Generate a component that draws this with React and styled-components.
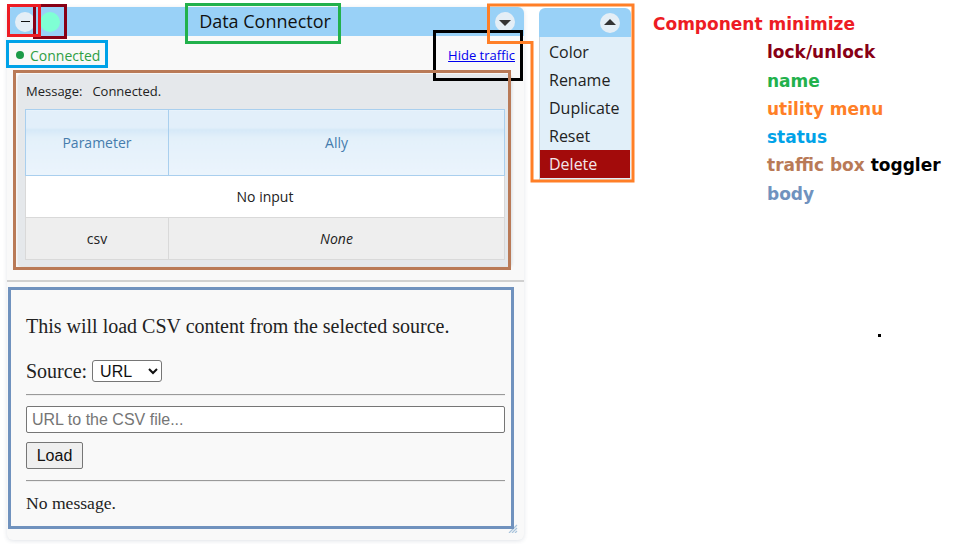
import React from "react";
import styled, { createGlobalStyle } from "styled-components";

const Global = createGlobalStyle`
  html, body { margin: 0; padding: 0; background: #ffffff; }
  * { box-sizing: border-box; }
`;

const UI = `"Open Sans", "Noto Sans", sans-serif`;
const SERIF = `"Liberation Serif", "Times New Roman", serif`;
const ARIAL = `"Liberation Sans", Arial, sans-serif`;

const Page = styled.div`
  position: relative;
  width: 957px;
  height: 544px;
  display: flex;
  align-items: flex-start;
  padding-left: 7px;
  overflow: hidden;
`;

const Card = styled.div`
  margin-top: 7px;
  width: 517px;
  height: 533px;
  background: #f9f9f9;
  border-radius: 6px;
  box-shadow: 0 1px 4px rgba(60, 80, 110, 0.16);
  display: flex;
  flex-direction: column;
  position: relative;
  font-family: ${UI};
`;

const Header = styled.div`
  height: 29px;
  background: #99d1f7;
  border-radius: 6px 6px 0 0;
  display: grid;
  grid-template-columns: 1fr auto 1fr;
  align-items: center;
  padding: 0 9px 0 8px;
`;

const HeaderSide = styled.div`
  display: flex;
  align-items: center;
  gap: 5px;
  justify-content: ${(p) => (p.$end ? "flex-end" : "flex-start")};
`;

const RoundButton = styled.div`
  width: 20px;
  height: 20px;
  border-radius: 50%;
  background: ${(p) => p.$bg || "#e4eef6"};
  display: flex;
  align-items: center;
  justify-content: center;
`;

const MinusBar = styled.span`
  width: 9px;
  height: 1.6px;
  background: #111;
`;

const Triangle = styled.span`
  width: 0;
  height: 0;
  border-left: 6px solid transparent;
  border-right: 6px solid transparent;
  ${(p) =>
    p.$up
      ? "border-bottom: 6px solid #333; margin-top: -2px;"
      : "border-top: 6px solid #333; margin-top: 2px;"}
`;

const Title = styled.div`
  font-size: 18px;
  color: #111;
  line-height: 29px;
  white-space: nowrap;
`;

const StatusRow = styled.div`
  height: 36px;
  display: flex;
  align-items: center;
  justify-content: space-between;
  padding: 2px 9px 0 9px;
`;

const Status = styled.div`
  display: flex;
  align-items: center;
  gap: 6px;
  font-size: 14px;
  color: #2f9e44;
`;

const StatusDot = styled.span`
  width: 8px;
  height: 8px;
  border-radius: 50%;
  background: #1b9a47;
`;

const ToggleLink = styled.a`
  font-size: 13px;
  color: #0000ee;
  text-decoration: underline;
  cursor: pointer;
`;

const Traffic = styled.div`
  margin: 2px 12px 0 11px;
  background: #e5e8eb;
  border-radius: 4px;
  box-shadow: 0 1px 3px rgba(0, 0, 0, 0.12);
  padding: 8px 7px 6px 7px;
`;

const MessageLine = styled.div`
  height: 18px;
  display: flex;
  align-items: center;
  gap: 10px;
  font-size: 13px;
  color: #222;
  margin: 0 0 9px 1px;
`;

const Table = styled.table`
  width: 100%;
  border-collapse: collapse;
  font-size: 14px;
  color: #222;
`;

const HeadCell = styled.th`
  height: 66px;
  font-weight: normal;
  color: #457cad;
  border: 1px solid #a9cfee;
  background: linear-gradient(
    to bottom,
    #e2effa 0%,
    #e2effa 26%,
    #d6e9f8 30%,
    #e3f0fa 42%,
    #ebf4fc 100%
  );
  width: ${(p) => p.$w || "auto"};
`;

const Cell = styled.td`
  height: 42px;
  text-align: center;
  border: 1px solid #d9d9d9;
  background: ${(p) => (p.$shade ? "#eeeeee" : "#ffffff")};
  font-style: ${(p) => (p.$italic ? "italic" : "normal")};
`;

const Separator = styled.div`
  margin-top: 14px;
  height: 2px;
  background: #d0d0d0;
`;

const Body = styled.div`
  flex: 1;
  padding: 33px 19px 0 19px;
  font-family: ${SERIF};
  color: #222;
`;

const Para = styled.p`
  margin: 0 0 22px 0;
  font-size: 20px;
  line-height: 23px;
`;

const SourceRow = styled.div`
  display: flex;
  align-items: center;
  gap: 5px;
  height: 22px;
  font-size: 20px;
`;

const Select = styled.select`
  width: 70px;
  height: 22px;
  font-family: ${ARIAL};
  font-size: 16px;
  color: #111;
  border: 1px solid #767676;
  border-radius: 3px;
  background: #fff;
  padding: 0 0 0 3px;
`;

const Rule = styled.hr`
  margin: ${(p) => p.$m || "12px 0 0 0"};
  border: 0;
  border-top: 1px solid #9a9a9a;
  border-bottom: 1px solid #eeeeee;
  height: 0;
`;

const UrlInput = styled.input`
  display: block;
  margin-top: 10px;
  width: 100%;
  height: 27px;
  border: 1px solid #767676;
  border-radius: 2px;
  background: #fff;
  font-family: ${ARIAL};
  font-size: 16px;
  padding: 0 5px;
  &::placeholder { color: #757575; }
`;

const LoadButton = styled.button`
  display: block;
  margin-top: 9px;
  height: 27px;
  width: 57px;
  padding: 0;
  font-family: ${ARIAL};
  font-size: 16px;
  color: #111;
  background: #efefef;
  border: 1px solid #767676;
  border-radius: 2px;
`;

const Note = styled.div`
  margin-top: 12px;
  font-size: 17.6px;
  line-height: 19px;
`;

const ResizeHandle = styled.svg`
  position: absolute;
  right: 6px;
  bottom: 7px;
`;

const Menu = styled.div`
  margin: 8px 0 0 15px;
  width: 92px;
  font-family: ${UI};
  display: flex;
  flex-direction: column;
`;

const MenuHeader = styled.div`
  height: 29px;
  background: #99d1f7;
  border-radius: 6px 6px 0 0;
  display: flex;
  align-items: center;
  justify-content: flex-end;
  padding-right: 11px;
`;

const MenuList = styled.div`
  background: #e1eff9;
  border-left: 1px solid #c9d6df;
  padding: 1px 1px 2px 0;
`;

const MenuItem = styled.div`
  height: 28px;
  line-height: 28px;
  padding-left: 9px;
  font-size: 16px;
  color: ${(p) => (p.$danger ? "#f2e6ea" : "#222")};
  background: ${(p) => (p.$danger ? "#a30b0b" : "transparent")};
`;

const Legend = styled.div`
  margin: 10px 0 0 22px;
  font-family: "DejaVu Sans", Verdana, sans-serif;
  font-weight: bold;
  font-size: 17px;
  display: flex;
  flex-direction: column;
`;

const LegendLine = styled.div`
  height: 28.3px;
  line-height: 28px;
  white-space: nowrap;
  padding-left: ${(p) => (p.$indent ? "114px" : "0")};
`;

const Tag = styled.span`
  color: ${(p) => p.$c};
`;

const Overlay = styled.svg`
  position: absolute;
  left: 0;
  top: 0;
  pointer-events: none;
`;

const C = {
  red: "#ed1c24",
  darkred: "#880015",
  green: "#22b14c",
  orange: "#ff7f27",
  blue: "#00a2e8",
  brown: "#b97a57",
  black: "#000000",
  steel: "#7092be",
};

const frames = [
  { c: C.darkred, x: 34.5, y: 5.5, w: 31, h: 32 },
  { c: C.red, x: 8.5, y: 5.5, w: 31, h: 30 },
  { c: C.green, x: 186.5, y: 4.5, w: 153, h: 38 },
  { c: C.blue, x: 7.5, y: 41.5, w: 99, h: 25 },
  { c: C.black, x: 434.5, y: 31.5, w: 87, h: 48 },
  { c: C.brown, x: 14.5, y: 71.5, w: 495, h: 197 },
  { c: C.steel, x: 9.5, y: 288.5, w: 503, h: 239 },
];

const legend = [
  [["Component minimize", C.red]],
  [["lock/unlock", C.darkred]],
  [["name", C.green]],
  [["utility menu", C.orange]],
  [["status", C.blue]],
  [["traffic box", C.brown], [" toggler", C.black]],
  [["body", C.steel]],
];

export default function App() {
  return (
    <>
      <Global />
      <Page>
        <Card>
          <Header>
            <HeaderSide>
              <RoundButton>
                <MinusBar />
              </RoundButton>
              <RoundButton $bg="#7fffd4" />
            </HeaderSide>
            <Title>Data Connector</Title>
            <HeaderSide $end>
              <RoundButton>
                <Triangle />
              </RoundButton>
            </HeaderSide>
          </Header>
          <StatusRow>
            <Status>
              <StatusDot />
              Connected
            </Status>
            <ToggleLink>Hide traffic</ToggleLink>
          </StatusRow>
          <Traffic>
            <MessageLine>
              <span>Message:</span>
              <span>Connected.</span>
            </MessageLine>
            <Table>
              <thead>
                <tr>
                  <HeadCell $w="143px">Parameter</HeadCell>
                  <HeadCell>Ally</HeadCell>
                </tr>
              </thead>
              <tbody>
                <tr>
                  <Cell colSpan={2}>No input</Cell>
                </tr>
                <tr>
                  <Cell $shade>csv</Cell>
                  <Cell $shade $italic>
                    None
                  </Cell>
                </tr>
              </tbody>
            </Table>
          </Traffic>
          <Separator />
          <Body>
            <Para>This will load CSV content from the selected source.</Para>
            <SourceRow>
              <span>Source:</span>
              <Select defaultValue="url">
                <option value="url">URL</option>
                <option value="file">File</option>
              </Select>
            </SourceRow>
            <Rule />
            <UrlInput placeholder="URL to the CSV file..." />
            <LoadButton>Load</LoadButton>
            <Rule $m="11px 0 0 0" />
            <Note>No message.</Note>
          </Body>
          <ResizeHandle width="10" height="9" viewBox="0 0 10 9">
            <path d="M9 1 L1 9 M9 4 L4 9 M9 7 L7 9" stroke="#a9c4dc" strokeWidth="1.2" />
          </ResizeHandle>
        </Card>
        <Menu>
          <MenuHeader>
            <RoundButton>
              <Triangle $up />
            </RoundButton>
          </MenuHeader>
          <MenuList>
            <MenuItem>Color</MenuItem>
            <MenuItem>Rename</MenuItem>
            <MenuItem>Duplicate</MenuItem>
            <MenuItem>Reset</MenuItem>
            <MenuItem $danger>Delete</MenuItem>
          </MenuList>
        </Menu>
        <Legend>
          {legend.map((parts, i) => (
            <LegendLine key={i} $indent={i > 0}>
              {parts.map(([t, c]) => (
                <Tag key={t} $c={c}>
                  {t}
                </Tag>
              ))}
            </LegendLine>
          ))}
        </Legend>
        <Overlay width="957" height="544" viewBox="0 0 957 544">
          {frames.map((f, i) => (
            <rect key={i} x={f.x} y={f.y} width={f.w} height={f.h} fill="none" stroke={f.c} strokeWidth="3" />
          ))}
          <polygon
            points="488.5,5 633,5 633,181 532,181 532,42.5 488.5,42.5"
            fill="none"
            stroke={C.orange}
            strokeWidth="3"
          />
          <rect x="878" y="334" width="3" height="3" fill="#000" />
        </Overlay>
      </Page>
    </>
  );
}
